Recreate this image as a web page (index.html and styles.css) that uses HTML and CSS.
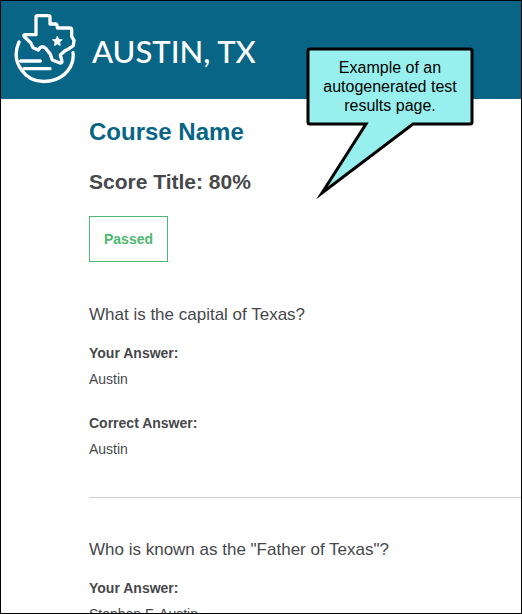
FILE: index.html
```html
<!DOCTYPE html>
<html lang="en">
<head>
<meta charset="utf-8">
<meta name="viewport" content="width=device-width, initial-scale=1">
<title>Test Results</title>
<link rel="stylesheet" href="styles.css">
</head>
<body>
<div class="page">
  <header class="header">
    <svg class="logo" viewBox="39 39 189 213" aria-hidden="true">
      <g fill="none" stroke="#fff" stroke-width="10" stroke-linecap="round" stroke-linejoin="round">
        <path d="M57 126C45 153 46 184 64 209C84 238 116 248 149 243C195 235 224 198 219 158"/>
        <path d="M113 47H145Q150 47 150 52V72H167Q172 73 172 84H209Q215 84 215 90V109L222 121L220 137L207 146L195 152L181 165L185 180Q188 190 180 189L157 180L151 163L137 145Q128 136 120 143L115 150L99 143L92 128L73 110Q68 104 77 104H108V52Q108 47 113 47Z"/>
        <path d="M62 183H121M72 206H150"/>
      </g>
      <path fill="#fff" stroke="#fff" stroke-width="2" stroke-linejoin="round" d="M172 108L176 118L187 119L179 126L181 137L172 132L163 137L165 126L157 119L168 118Z"/>
    </svg>
    <span class="brand">AUSTIN, TX</span>
  </header>

  <main class="results">
    <h1 class="course">Course Name</h1>
    <h2 class="score">Score Title: 80%</h2>
    <p class="status">Passed</p>

    <section class="question">
      <h3 class="prompt">What is the capital of Texas?</h3>
      <dl class="answers">
        <dt>Your Answer:</dt>
        <dd>Austin</dd>
        <dt>Correct Answer:</dt>
        <dd>Austin</dd>
      </dl>
    </section>

    <section class="question">
      <h3 class="prompt">Who is known as the "Father of Texas"?</h3>
      <dl class="answers">
        <dt>Your Answer:</dt>
        <dd>Stephen F. Austin</dd>
      </dl>
    </section>
  </main>

  <aside class="callout">
    <svg class="bubble" viewBox="0 0 168 156" aria-hidden="true">
      <path d="M4 2H164Q166 2 166 4V75Q166 77 164 77H107L16 146L60 77H4Q2 77 2 75V4Q2 2 4 2Z" fill="#97f0ed" stroke="#000" stroke-width="3" stroke-miterlimit="10"/>
    </svg>
    <p class="callout-text">Example of an autogenerated test results page.</p>
  </aside>
</div>
</body>
</html>
```
FILE: styles.css
```css
* {
  box-sizing: border-box;
}

body,
h1,
h2,
h3,
p,
dl,
dd {
  margin: 0;
}

body {
  background: #fff;
  color: #46484b;
  font-family: "Liberation Sans", Arial, sans-serif;
  font-size: 14px;
  line-height: 16px;
}

.page {
  position: relative;
  height: 100vh;
  overflow: hidden;
  border: 1px solid #000;
}

.header {
  display: flex;
  align-items: center;
  gap: 16px;
  padding: 12px 12px 15px;
  background: #086586;
}

.logo {
  width: 63px;
  height: 71px;
}

.brand {
  padding-top: 4px;
  color: #fff;
  font-family: Lato, sans-serif;
  font-size: 31px;
  font-weight: 500;
  line-height: 40px;
}

.results {
  padding: 19px 0 0 88px;
}

.course {
  color: #086586;
  font-size: 24px;
  line-height: 28px;
}

.score {
  margin-top: 24px;
  font-size: 21px;
  line-height: 24px;
}

.status {
  width: fit-content;
  margin: 22px 0 43px;
  padding: 14px;
  border: 1px solid #4db870;
  color: #4db870;
  font-weight: bold;
}

.question + .question {
  margin-top: 40px;
  padding-top: 42px;
  border-top: 1px solid #ccc;
}

.prompt {
  margin-bottom: 20px;
  font-size: 17px;
  font-weight: normal;
  line-height: 20px;
}

.answers dt {
  font-weight: bold;
}

.answers dd {
  margin-top: 10px;
}

.answers dd + dt {
  margin-top: 28px;
}

.callout {
  position: absolute;
  top: 46px;
  left: 305px;
  width: 168px;
  padding: 11px 14px;
  color: #000;
  font-size: 16px;
  line-height: 19px;
  text-align: center;
}

.bubble {
  position: absolute;
  top: 0;
  left: 0;
  width: 168px;
  height: 156px;
}

.callout-text {
  position: relative;
}
```
